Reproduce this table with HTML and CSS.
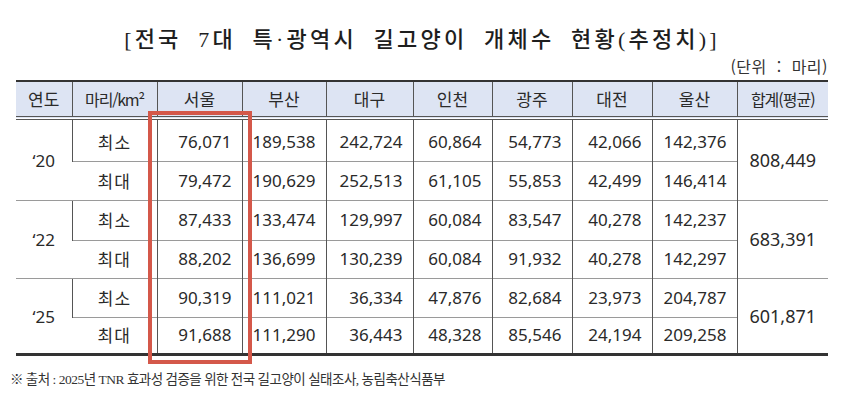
FILE: index.html
```html
<!DOCTYPE html>
<html lang="ko">
<head>
<meta charset="utf-8">
<title>전국 7대 특·광역시 길고양이 개체수 현황</title>
<link rel="stylesheet" href="styles.css">
</head>
<body>
<div class="page">
  <h1 class="title">[전국 7대 특·광역시 길고양이 개체수 현황(추정치)]</h1>
  <div class="unit">(단위 : 마리)</div>
  <div class="table-wrap">
    <table class="stats">
      <colgroup>
        <col class="c-year"><col class="c-kind"><col class="c-seoul"><col class="c-busan"><col class="c-daegu"><col class="c-incheon"><col class="c-gwangju"><col class="c-daejeon"><col class="c-ulsan"><col class="c-total">
      </colgroup>
      <thead>
        <tr>
          <th>연도</th><th class="unit-head">마리/km²</th><th>서울</th><th>부산</th><th>대구</th><th>인천</th><th>광주</th><th>대전</th><th>울산</th><th class="total-head">합계(평균)</th>
        </tr>
      </thead>
      <tbody>
        <tr class="r1">
          <td class="year" rowspan="2">‘20</td><td class="kind">최소</td>
          <td class="num">76,071</td><td class="num">189,538</td><td class="num">242,724</td><td class="num">60,864</td><td class="num">54,773</td><td class="num">42,066</td><td class="num">142,376</td>
          <td class="total" rowspan="2">808,449</td>
        </tr>
        <tr class="r2">
          <td class="kind">최대</td>
          <td class="num">79,472</td><td class="num">190,629</td><td class="num">252,513</td><td class="num">61,105</td><td class="num">55,853</td><td class="num">42,499</td><td class="num">146,414</td>
        </tr>
        <tr class="r3 group">
          <td class="year" rowspan="2">‘22</td><td class="kind">최소</td>
          <td class="num">87,433</td><td class="num">133,474</td><td class="num">129,997</td><td class="num">60,084</td><td class="num">83,547</td><td class="num">40,278</td><td class="num">142,237</td>
          <td class="total" rowspan="2">683,391</td>
        </tr>
        <tr class="r4">
          <td class="kind">최대</td>
          <td class="num">88,202</td><td class="num">136,699</td><td class="num">130,239</td><td class="num">60,084</td><td class="num">91,932</td><td class="num">40,278</td><td class="num">142,297</td>
        </tr>
        <tr class="r5 group">
          <td class="year" rowspan="2">‘25</td><td class="kind">최소</td>
          <td class="num">90,319</td><td class="num">111,021</td><td class="num">36,334</td><td class="num">47,876</td><td class="num">82,684</td><td class="num">23,973</td><td class="num">204,787</td>
          <td class="total" rowspan="2">601,871</td>
        </tr>
        <tr class="r6">
          <td class="kind">최대</td>
          <td class="num">91,688</td><td class="num">111,290</td><td class="num">36,443</td><td class="num">48,328</td><td class="num">85,546</td><td class="num">24,194</td><td class="num">209,258</td>
        </tr>
      </tbody>
    </table>
    <div class="highlight"></div>
  </div>
  <p class="source">※ 출처 : 2025년 TNR 효과성 검증을 위한 전국 길고양이 실태조사, 농림축산식품부</p>
</div>
</body>
</html>
```

FILE: styles.css
```css
* { box-sizing: border-box; }

html, body {
  margin: 0;
  padding: 0;
  background: #ffffff;
}

body {
  font-family: "Noto Sans", "Noto Sans CJK KR", sans-serif;
  color: #222;
}

.page {
  width: 850px;
  padding: 0 22px 0 16px;
}

.title {
  margin: 0;
  padding-top: 26px;
  height: 54px;
  line-height: 28px;
  font-family: "Liberation Serif", "Noto Sans CJK KR", serif;
  font-size: 22px;
  font-weight: 500;
  letter-spacing: 3.2px;
  word-spacing: 8px;
  text-align: center;
  color: #1e1e1e;
}

.unit {
  margin-top: 2px;
  height: 20px;
  line-height: 20px;
  text-align: right;
  font-family: "Noto Sans CJK KR", sans-serif;
  font-size: 16px;
  word-spacing: 5px;
  letter-spacing: 0.5px;
  color: #333;
}

.table-wrap {
  position: relative;
  margin-top: 4px;
}

.stats {
  width: 812px;
  border-collapse: collapse;
  table-layout: fixed;
  border-top: 2px solid #333;
  border-bottom: 3px solid #333;
  font-size: 17px;
}

.c-year { width: 56px; }
.c-kind { width: 85px; }
.c-seoul { width: 85px; }
.c-busan { width: 84px; }
.c-daegu { width: 87px; }
.c-incheon { width: 79px; }
.c-gwangju { width: 80px; }
.c-daejeon { width: 80px; }
.c-ulsan { width: 85px; }
.c-total { width: 91px; }

.stats th,
.stats td {
  padding: 0;
  border-left: 1px solid #555;
  border-top: 1px solid #9a9a9a;
  line-height: 20px;
  color: #2a2a2a;
}

.stats th:first-child,
.stats td:first-child {
  border-left: none;
}

.stats thead th {
  height: 37px;
  background: #dde4f3;
  font-family: "Noto Sans CJK KR", sans-serif;
  font-weight: 400;
  font-size: 17px;
  text-align: center;
  border-bottom: 4px double #555;
  border-top: none;
}

.stats .unit-head {
  letter-spacing: -1.2px;
  font-size: 16px;
}

.stats .total-head {
  letter-spacing: -1px;
  font-size: 16px;
}

.stats tr.r1 td { height: 43px; border-top: none; }
.stats tr.r1 td.kind,
.stats tr.r1 td.num { padding-top: 3px; }
.stats tr.r2 td { height: 39px; }
.stats tr.r3 td { height: 40px; }
.stats tr.r4 td { height: 38px; }
.stats tr.r5 td { height: 39px; }
.stats tr.r6 td { height: 37px; }

.stats .year {
  text-align: center;
  padding-top: 2px;
}

.stats .kind {
  text-align: center;
  letter-spacing: 1px;
  font-family: "Noto Sans CJK KR", sans-serif;
}

.stats .num {
  text-align: right;
  padding-right: 10px;
}

.stats .total {
  text-align: center;
  font-size: 18px;
}

.highlight {
  position: absolute;
  left: 132px;
  top: 31px;
  width: 104px;
  height: 253px;
  border: 4px solid #d4584a;
  pointer-events: none;
}

.source {
  margin: 14px 0 0 -6px;
  height: 20px;
  line-height: 20px;
  font-family: "Liberation Serif", "Noto Sans CJK KR", serif;
  font-size: 13.5px;
  letter-spacing: -0.5px;
  color: #333;
}
```
